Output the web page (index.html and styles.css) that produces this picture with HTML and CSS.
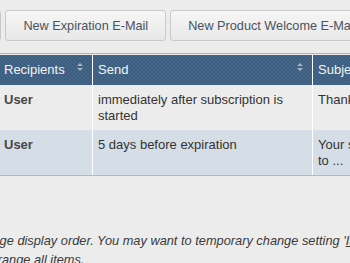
FILE: index.html
```html
<!DOCTYPE html>
<html lang="en">
<head>
  <meta charset="UTF-8" />
  <title>E-Mail Notifications</title>
  <link rel="stylesheet" href="styles.css">
</head>
<body>
  <div class="toolbar">
    <button type="button">New Reminder E-Mail</button>
    <button type="button">New Expiration E-Mail</button>
    <button type="button">New Product Welcome E-Mail</button>
  </div>

  <table class="grid">
    <thead>
      <tr>
        <th class="col-rcpt">Recipients
          <span class="sort"><svg width="6" height="8" viewBox="0 0 6 8"><path d="M3 0L6 3H0z M0 5h6L3 8z" fill="#a7b4c1"/></svg></span>
        </th>
        <th class="col-send">Send
          <span class="sort"><svg width="6" height="8" viewBox="0 0 6 8"><path d="M3 0L6 3H0z M0 5h6L3 8z" fill="#a7b4c1"/></svg></span>
        </th>
        <th class="col-subj">Subject</th>
      </tr>
    </thead>
    <tbody>
      <tr>
        <td class="who">User</td>
        <td>immediately after subscription is started</td>
        <td>Thank you for your order</td>
      </tr>
      <tr class="alt">
        <td class="who">User</td>
        <td>5 days before expiration</td>
        <td>Your subscription is about to ...</td>
      </tr>
    </tbody>
  </table>

  <p class="hint">Change display order. You may want to temporary change setting '<a href="#">Items per page</a>' to 'All'.<br>To arrange all items.</p>
</body>
</html>
```

FILE: styles.css
```css
html, body {
  overflow: hidden;
}

body {
  margin: 0;
  background-color: #ececec;
  font-family: "Liberation Sans", Arial, sans-serif;
  font-size: 13px;
  color: #333;
}

.toolbar {
  display: flex;
  gap: 4px;
  padding-top: 10px;
  margin-left: -158px;
}

.toolbar button {
  flex: none;
  height: 31px;
  padding: 0 17px;
  font-family: inherit;
  font-size: 12.7px;
  color: #4a535e;
  background: linear-gradient(#f6f6f6, #e8e8e8);
  border: 1px solid #c9c9c9;
  border-radius: 3px;
  white-space: nowrap;
}

.grid {
  margin-top: 12px;
  margin-left: -1px;
  width: 479px;
  table-layout: fixed;
  border-collapse: separate;
  border-spacing: 0;
  border-top: 1px solid #b3b3b3;
  border-bottom: 1px solid #b8b8b8;
  padding-top: 1px;
}

.grid th, .grid td {
  box-sizing: border-box;
  padding: 0 5px;
  line-height: 16px;
  text-align: left;
  border-left: 1px solid #fff;
}

.grid th:first-child, .grid td:first-child {
  border-left: none;
}

.col-rcpt { width: 93px; }
.col-send { width: 220px; }
.col-subj { width: 166px; }

.grid th {
  height: 30px;
  font-weight: normal;
  color: #f2f4f6;
  background-color: #3b5e80;
  background-image:
    linear-gradient(45deg, rgba(255,255,255,0.05) 25%, transparent 25%, transparent 75%, rgba(255,255,255,0.05) 75%),
    linear-gradient(45deg, rgba(255,255,255,0.05) 25%, transparent 25%, transparent 75%, rgba(255,255,255,0.05) 75%);
  background-size: 4px 4px;
  background-position: 0 0, 2px 2px;
  vertical-align: middle;
}

.sort {
  float: right;
  margin-right: 4px;
  margin-top: 1px;
}

.sort svg {
  display: block;
}

.grid td {
  height: 45px;
  padding-top: 7px;
  padding-bottom: 6px;
  vertical-align: top;
}

.grid td.who {
  font-weight: bold;
  color: #474747;
}

.grid tr.alt td {
  background-color: #d5dee6;
}

.hint {
  margin: 55px 0 0 -31px;
  font-size: 12.8px;
  font-style: italic;
  line-height: 19px;
  color: #3a3a3a;
  white-space: nowrap;
}

.hint a {
  color: #3a3a3a;
}
```
